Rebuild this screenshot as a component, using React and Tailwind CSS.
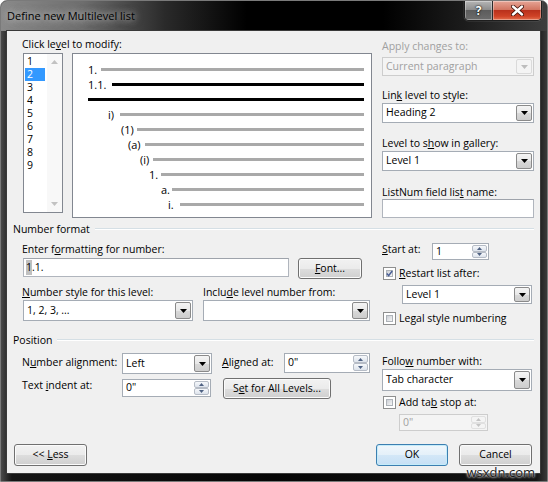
import React from 'react'

// little access-key underline
const U = ({ children }) => <span className="underline decoration-1 underline-offset-[1px]">{children}</span>

const Label = ({ children, className = '' }) => (
    <div className={`h-[14px] leading-[14px] whitespace-nowrap ${className}`}>{children}</div>
)

const ArrowBtn = ({ disabled }) => (
    <div className={`w-[16px] flex items-center justify-center rounded-[2px] border ${disabled ? 'border-[#dadada] bg-[#f4f4f4]' : 'border-[#8a8a8a] bg-[linear-gradient(#f4f4f4_0%,#e8e8e8_50%,#d9d9d9_51%,#cdcdcd_100%)]'}`}>
        <svg width="7" height="4" viewBox="0 0 7 4"><path d="M0 0h7L3.5 4z" fill={disabled ? '#bdbdbd' : '#000'} /></svg>
    </div>
)

const Combo = ({ value, className = '', disabled }) => (
    <div className={`flex items-stretch border p-[1px] ${disabled ? 'border-[#cdcdcd] bg-[#f4f4f4] text-[#a0a0a0]' : 'border-[#a5acb5] bg-white'} ${className}`}>
        <div className="flex-1 flex items-center pl-[2px] whitespace-nowrap overflow-hidden">{value}</div>
        <ArrowBtn disabled={disabled} />
    </div>
)

const SpinArrow = ({ up, disabled }) => (
    <div className={`flex-1 flex items-center justify-center rounded-[2px] border ${disabled ? 'border-[#e0e0e0] bg-[#f4f4f4]' : 'border-[#b6bcc6] bg-[linear-gradient(#f6f8fb,#dde3ec)]'}`}>
        <svg width="5" height="3" viewBox="0 0 5 3">
            <path d={up ? 'M0 3L2.5 0 5 3z' : 'M0 0h5L2.5 3z'} fill={disabled ? '#c4c4c4' : '#4f6283'} />
        </svg>
    </div>
)

const Spin = ({ value, className = '', disabled }) => (
    <div className={`flex items-stretch border p-[1px] ${disabled ? 'border-[#cdcdcd] bg-[#f4f4f4] text-[#a0a0a0]' : 'border-[#a5acb5] bg-white'} ${className}`}>
        <div className="flex-1 flex items-center pl-[2px]">{value}</div>
        <div className="w-[15px] flex flex-col">
            <SpinArrow up disabled={disabled} />
            <SpinArrow disabled={disabled} />
        </div>
    </div>
)

const TextBox = ({ children, className = '' }) => (
    <div className={`flex items-center bg-white border border-[#b0b5bd] border-t-[#9ea3ab] pl-[2px] ${className}`}>{children}</div>
)

const Btn = ({ children, className = '', def }) => (
    <div className={`flex items-center justify-center whitespace-pre rounded-[3px] border ${def ? 'border-[#3c7fb1] shadow-[inset_0_0_0_1px_#c5ecfa] bg-[linear-gradient(#f0f7fc_0%,#e4f0f9_50%,#d3e7f7_51%,#c6e0f5_100%)]' : 'border-[#707070] shadow-[inset_0_0_0_1px_#fbfbfb] bg-[linear-gradient(#f2f2f2_0%,#ebebeb_50%,#dddddd_51%,#cfcfcf_100%)]'} ${className}`}>
        {children}
    </div>
)

const Check = ({ checked }) => (
    <div className="w-[13px] h-[13px] border border-[#8e8f8f] bg-white p-[2px] shrink-0">
        <div className="w-full h-full border border-[#aeb3b9] bg-[linear-gradient(135deg,#cbcfd5,#f6f6f6)] flex items-center justify-center">
            {checked && (
                <svg width="9" height="9" viewBox="0 0 9 9" className="-m-[1px]">
                    <path d="M1 4.5L3.4 7.2L8 1.2" stroke="#4a5f97" strokeWidth="1.9" fill="none" />
                </svg>
            )}
        </div>
    </div>
)

const GroupHeader = ({ title }) => (
    <div className="h-[14px] flex items-center pl-[6px] pr-[6px]">
        <span className="leading-[14px] whitespace-nowrap">{title}</span>
        <div className="flex-1 ml-[5px] h-[2px] border-t border-[#d5dfe5] border-b-white border-b" />
    </div>
)

// preview rows: text x, line start x (window coordinates)
const previewRows = [
    { t: '1.', x: 89, l: 102 },
    { t: '1.1.', x: 89, l: 113, black: true },
    { t: '', x: 89, l: 89, black: true },
    { t: 'i)', x: 109, l: 121 },
    { t: '(1)', x: 122, l: 138 },
    { t: '(a)', x: 129, l: 146 },
    { t: '(i)', x: 141, l: 154 },
    { t: '1.', x: 150, l: 162 },
    { t: 'a.', x: 162, l: 173 },
    { t: 'i.', x: 169, l: 181 },
]

const App = () => {
    return (
        <div className="relative w-[548px] h-[482px] flex flex-col border border-[#7a7a7a] rounded-t-[7px] overflow-hidden bg-[linear-gradient(90deg,#4a4a4a_0%,#141414_2%,#050505_50%,#141414_98%,#3a3a3a_100%)] font-['Open_Sans',sans-serif] text-[10.5px] text-black antialiased">
            {/* title bar */}
            <div className="h-[30px] flex items-start bg-[linear-gradient(90deg,#8a8a8a_0%,#6e6e6e_15%,#2a2a2a_30%,#000_45%,#000_70%,#1c1c1c_85%,#3e3e3e_100%)]">
                <div className="mt-[7px] ml-[6px] text-[11px] leading-[16px] [text-shadow:0_0_6px_rgba(220,220,220,0.9),0_0_10px_rgba(200,200,200,0.6)]">
                    Define new Multilevel list
                </div>
                <div className="ml-auto mr-[5px] flex h-[20px] rounded-b-[5px] border border-t-0 border-[#1e1e1e] overflow-hidden shadow-[0_0_1px_#bbb]">
                    <div className="w-[28px] flex items-center justify-center border-r border-[#2a2a2a] bg-[linear-gradient(#b5b5b5_0%,#8e8e8e_45%,#5c5c5c_50%,#6c6c6c_100%)] shadow-[inset_0_0_0_1px_rgba(255,255,255,0.35)]">
                        <span className="text-white font-bold text-[12px] leading-none [text-shadow:0_0_2px_#000,0_0_1px_#000]">?</span>
                    </div>
                    <div className="w-[48px] flex items-center justify-center bg-[linear-gradient(#e6a596_0%,#d27662_45%,#b9311c_50%,#cf4226_80%,#e3704f_100%)] shadow-[inset_0_0_0_1px_rgba(255,255,255,0.35)]">
                        <svg width="13" height="11" viewBox="0 0 13 11">
                            <path d="M2 1.5L11 9.5M11 1.5L2 9.5" stroke="#3a0d05" strokeWidth="4" strokeLinecap="round" />
                            <path d="M2 1.5L11 9.5M11 1.5L2 9.5" stroke="#fff" strokeWidth="2.4" strokeLinecap="round" />
                        </svg>
                    </div>
                </div>
            </div>

            {/* client area */}
            <div className="ml-[6px] mr-[7px] h-[442px] flex flex-col bg-[#f0f0f0] shadow-[0_0_0_1px_#3a3a3a]">
                {/* levels + preview + right column */}
                <div className="flex pl-[15px] pt-[6px]">
                    <div className="w-[351px]">
                        <Label>Click le<U>v</U>el to modify:</Label>
                        <div className="flex mt-[2px]">
                            <div className="ml-[1px] w-[40px] h-[160px] border border-[#828790] bg-white flex">
                                <div className="flex-1 pt-[1px] pl-[1px]">
                                    {[1, 2, 3, 4, 5, 6, 7, 8, 9].map((n) => (
                                        <div key={n} className={`h-[13px] leading-[13px] pl-[2px] w-[20px] ${n === 2 ? 'bg-[#3399ff] text-white' : ''}`}>{n}</div>
                                    ))}
                                </div>
                                <div className="w-[15px] bg-[#f8f8f8] flex flex-col items-center justify-between py-[6px]">
                                    <svg width="7" height="4" viewBox="0 0 7 4"><path d="M0 4L3.5 0 7 4z" fill="#c2c2c2" /></svg>
                                    <svg width="7" height="4" viewBox="0 0 7 4"><path d="M0 0h7L3.5 4z" fill="#c2c2c2" /></svg>
                                </div>
                            </div>
                            <div className="ml-[9px] w-[300px] h-[165px] border border-[#828790] bg-white pt-[8px] text-[11px]">
                                {previewRows.map((r, i) => (
                                    <div key={i} className="h-[15px] flex items-center pr-[7px]" style={{ paddingLeft: r.x - 74 }}>
                                        {r.t && <span className="leading-[15px] whitespace-nowrap" style={{ width: r.l - r.x }}>{r.t}</span>}
                                        <div className={`flex-1 h-[3px] ${r.black ? 'bg-black' : 'bg-[#a9a9a9]'}`} />
                                    </div>
                                ))}
                            </div>
                        </div>
                    </div>
                    <div className="ml-[9px] w-[152px] mt-[2px] flex flex-col">
                        <Label className="text-[#a0a0a0]">Apply changes to:</Label>
                        <Combo disabled value="Current paragraph" className="mt-[4px] h-[19px]" />
                        <Label className="mt-[12px]">Lin<U>k</U> level to style:</Label>
                        <Combo value="Heading 2" className="mt-[1px] h-[20px]" />
                        <Label className="mt-[13px]">Level to s<U>h</U>ow in gallery:</Label>
                        <Combo value="Level 1" className="mt-[1px] h-[20px]" />
                        <Label className="mt-[14px]">ListNum field lis<U>t</U> name:</Label>
                        <TextBox className="h-[19px]" />
                    </div>
                </div>

                <div className="mt-[4px]"><GroupHeader title="Number format" /></div>

                {/* number format */}
                <div className="h-[97px] flex pl-[15px]">
                    <div className="w-[348px]">
                        <Label className="mt-[6px]">Enter f<U>o</U>rmatting for number:</Label>
                        <div className="flex items-start mt-[2px]">
                            <TextBox className="ml-[1px] w-[266px] h-[19px]">
                                <span className="bg-[#c0c0c0]">1</span>.1.
                            </TextBox>
                            <Btn className="ml-[9px] w-[64px] h-[21px]"><U>F</U>ont...</Btn>
                        </div>
                        <div className="flex mt-[6px]">
                            <div className="w-[181px]">
                                <Label><U>N</U>umber style for this level:</Label>
                                <Combo value="1, 2, 3, ..." className="mt-[1px] ml-[1px] w-[170px] h-[21px]" />
                            </div>
                            <div className="flex-1">
                                <Label>Inclu<U>d</U>e level number from:</Label>
                                <Combo value="" className="mt-[1px] w-[167px] h-[21px]" />
                            </div>
                        </div>
                    </div>
                    <div className="ml-[12px] w-[152px] flex flex-col">
                        <div className="flex mt-[7px] h-[17px]">
                            <Label className="w-[50px] mt-[-1px]"><U>S</U>tart at:</Label>
                            <Spin value="1" className="w-[57px] h-[17px]" />
                        </div>
                        <div className="flex items-center mt-[6px] h-[14px]">
                            <div className="ml-[1px]"><Check checked /></div>
                            <Label className="ml-[3px]"><U>R</U>estart list after:</Label>
                        </div>
                        <Combo value="Level 1" className="mt-[5px] ml-[20px] w-[130px] h-[19px]" />
                        <div className="flex items-center mt-[7px] h-[14px]">
                            <div className="ml-[1px]"><Check /></div>
                            <Label className="ml-[3px]">Legal style numbering</Label>
                        </div>
                    </div>
                </div>

                <GroupHeader title="Position" />

                {/* position */}
                <div className="h-[97px] flex pl-[15px]">
                    <div className="w-[348px]">
                        <div className="flex items-start mt-[6px]">
                            <Label className="w-[100px] mt-[2px]">N<U>u</U>mber alignment:</Label>
                            <Combo value="Left" className="w-[90px] h-[21px]" />
                            <Label className="ml-[10px] w-[62px] mt-[2px]"><U>A</U>ligned at:</Label>
                            <Spin value={'0"'} className="w-[86px] h-[20px]" />
                        </div>
                        <div className="flex items-start mt-[4px]">
                            <Label className="w-[100px]">Text <U>i</U>ndent at:</Label>
                            <Spin value={'0"'} className="mt-[1px] w-[89px] h-[18px]" />
                            <Btn className="ml-[12px] w-[108px] h-[21px]">S<U>e</U>t for All Levels...</Btn>
                        </div>
                    </div>
                    <div className="ml-[12px] w-[152px] flex flex-col">
                        <Label className="mt-[7px]">Follo<U>w</U> number with:</Label>
                        <Combo value="Tab character" className="mt-[1px] w-[150px] h-[22px]" />
                        <div className="flex items-center mt-[4px] h-[14px]">
                            <div className="ml-[1px]"><Check /></div>
                            <Label className="ml-[3px]">Add ta<U>b</U> stop at:</Label>
                        </div>
                        <Spin disabled value={'0"'} className="mt-[5px] ml-[17px] w-[89px] h-[17px]" />
                    </div>
                </div>

                {/* buttons */}
                <div className="flex h-[22px]">
                    <Btn className="ml-[7px] w-[73px]">{'<< '}<U>L</U>ess</Btn>
                    <Btn def className="ml-auto w-[72px]">OK</Btn>
                    <Btn className="ml-[11px] mr-[8px] w-[73px]">Cancel</Btn>
                </div>
            </div>

            {/* watermark */}
            <div className="absolute right-[12px] bottom-[1px] text-[13px] leading-[15px] text-[#1a1a1a] [text-shadow:0_0_2px_#fff,0_0_3px_#fff]">wsxdn.com</div>
        </div>
    )
}

export default App
